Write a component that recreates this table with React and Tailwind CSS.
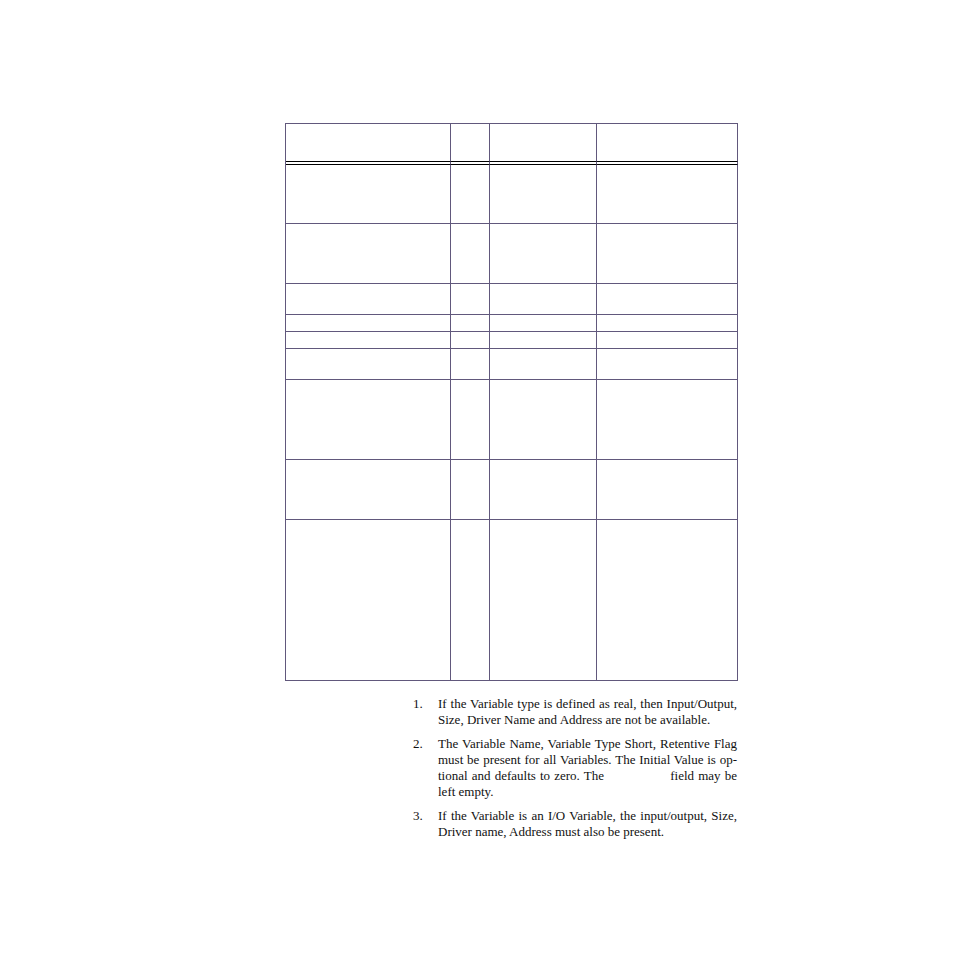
import React from 'react';

const cols = ['w-[165px]', 'w-[39px]', 'w-[107px]', 'w-[141px]'];
const rowHeights = ['h-[59px]', 'h-[60px]', 'h-[31px]', 'h-[17px]', 'h-[17px]', 'h-[31px]', 'h-[80px]', 'h-[60px]', 'h-[161px]'];

function Row({ height, cellClass = 'border-[#645a82]' }) {
  return (
    <div className="flex">
      {cols.map((w, i) => (
        <div key={i} className={`${w} ${height} border-r border-b border-r-[#61587c] ${cellClass}`} />
      ))}
    </div>
  );
}

const notes = [
  <>If the Variable type is defined as real, then Input/Output, Size, Driver Name and Address are not be available.</>,
  <>
    The Variable Name, Variable Type Short, Retentive Flag must be present for all Variables. The Initial Value is op-tional and defaults to zero. The{' '}
    <span className="inline-block w-[58px]" /> field may be left empty.
  </>,
  <>If the Variable is an I/O Variable, the input/output, Size, Driver name, Address must also be present.</>,
];

export default function App() {
  return (
    <div className="min-h-[954px] bg-white pt-[123px] pl-[285px]" style={{ fontFamily: '"Liberation Serif", "Times New Roman", serif' }}>
      <div className="inline-flex flex-col border-l border-t border-[#61587c]">
        <Row height="h-[38px]" cellClass="border-b-black" />
        <Row height="h-[3px]" cellClass="border-b-black" />
        {rowHeights.map((h, i) => (
          <Row key={i} height={h} cellClass="border-b-[#61587c]" />
        ))}
      </div>

      <ol className="mt-[15px] ml-[128px] flex w-[324px] flex-col gap-[8px] text-[13px] leading-[16px] text-[#111]">
        {notes.map((n, i) => (
          <li key={i} className="flex">
            <span className="w-[25px] shrink-0">{i + 1}.</span>
            <p className="w-[299px] text-justify">{n}</p>
          </li>
        ))}
      </ol>
    </div>
  );
}
